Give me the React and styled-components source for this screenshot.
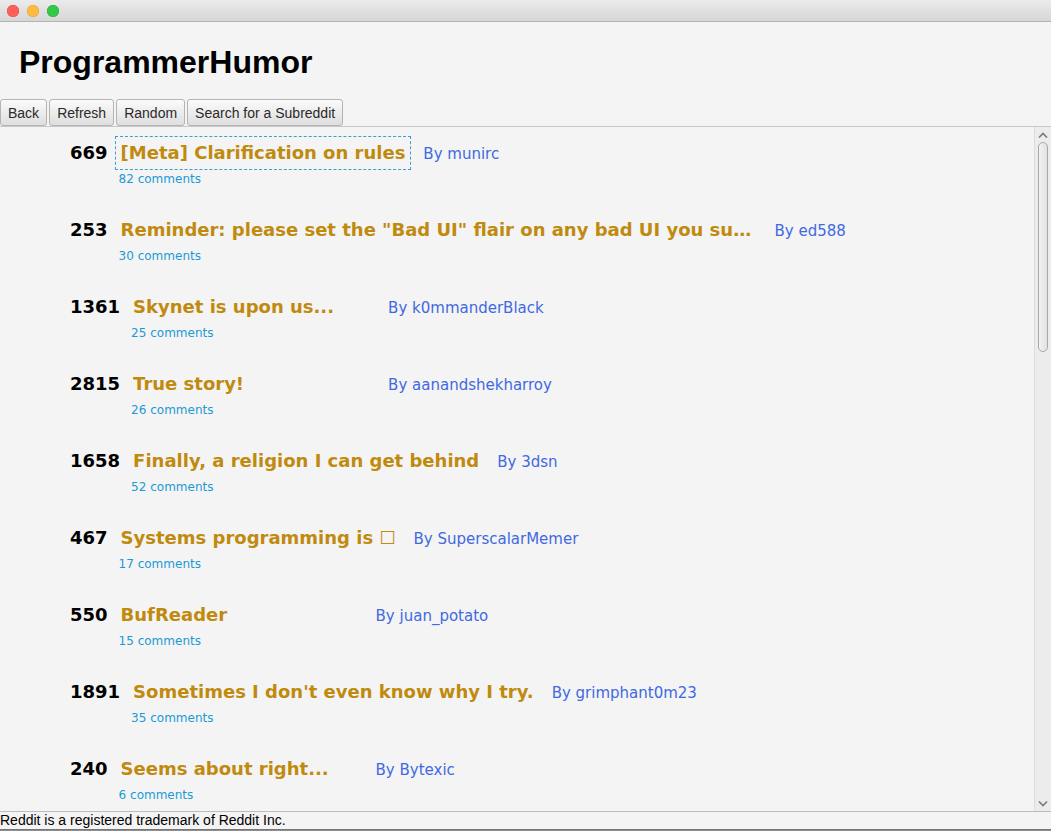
import React from 'react';
import styled, { createGlobalStyle } from 'styled-components';

const GlobalStyle = createGlobalStyle`
  html, body { margin: 0; padding: 0; height: 100%; background: #f4f4f4; }
  #root { height: 100%; }
`;

const posts = [
  { score: 669, title: '[Meta] Clarification on rules', author: 'munirc', comments: 82, focused: true },
  { score: 253, title: 'Reminder: please set the "Bad UI" flair on any bad UI you submit', author: 'ed588', comments: 30 },
  { score: 1361, title: 'Skynet is upon us...', author: 'k0mmanderBlack', comments: 25 },
  { score: 2815, title: 'True story!', author: 'aanandshekharroy', comments: 26 },
  { score: 1658, title: 'Finally, a religion I can get behind', author: '3dsn', comments: 52 },
  { score: 467, title: 'Systems programming is \u2610', author: 'SuperscalarMemer', comments: 17 },
  { score: 550, title: 'BufReader', author: 'juan_potato', comments: 15 },
  { score: 1891, title: "Sometimes I don't even know why I try.", author: 'grimphant0m23', comments: 35 },
  { score: 240, title: 'Seems about right...', author: 'Bytexic', comments: 6 },
];

function App() {
  return (
    <Window>
      <GlobalStyle />
      <TitleBar>
        <Light color="#fc605b" edge="#de4a45" />
        <Light color="#fdbc40" edge="#dea236" />
        <Light color="#34c84a" edge="#27aa35" />
      </TitleBar>
      <Header>ProgrammerHumor</Header>
      <Toolbar>
        <Button>Back</Button>
        <Button>Refresh</Button>
        <Button>Random</Button>
        <Button>Search for a Subreddit</Button>
      </Toolbar>
      <ScrollPane>
        <List>
          {posts.map((p) => (
            <Item key={p.score}>
              <Score>{p.score}</Score>
              <Body>
                <TitleRow>
                  <Title focused={p.focused}>{p.title}</Title>
                  <Author>By {p.author}</Author>
                </TitleRow>
                <Comments>{p.comments} comments</Comments>
              </Body>
            </Item>
          ))}
        </List>
        <ScrollBar>
          <Arrow>
            <svg width="10" height="6" viewBox="0 0 10 6"><path d="M1 5.5 L5 1.5 L9 5.5" fill="none" stroke="#7a7a7a" strokeWidth="1.6" /></svg>
          </Arrow>
          <Thumb />
          <Track />
          <Arrow>
            <svg width="10" height="6" viewBox="0 0 10 6"><path d="M1 0.5 L5 4.5 L9 0.5" fill="none" stroke="#7a7a7a" strokeWidth="1.6" /></svg>
          </Arrow>
        </ScrollBar>
      </ScrollPane>
      <Footer>Reddit is a registered trademark of Reddit Inc.</Footer>
      <Desktop />
    </Window>
  );
}
export default App;

const Window = styled.div`
  height: 100vh;
  display: flex;
  flex-direction: column;
  background: #f4f4f4;
  overflow: hidden;
`
const TitleBar = styled.div`
  height: 21px;
  flex-shrink: 0;
  display: flex;
  align-items: center;
  gap: 8px;
  padding-left: 7px;
  background: linear-gradient(#ebebeb, #d6d6d6);
  border-bottom: 1px solid #b3b3b3;
`
const Light = styled.span`
  width: 12px;
  height: 12px;
  border-radius: 50%;
  background: ${(p) => p.color};
  box-shadow: inset 0 0 0 0.5px ${(p) => p.edge};
`
const Header = styled.h1`
  margin: 0;
  height: 73px;
  padding-top: 4px;
  flex-shrink: 0;
  display: flex;
  align-items: center;
  padding-left: 19px;
  font-family: "Liberation Sans", Arial, sans-serif;
  font-weight: bold;
  font-size: 32px;
  color: #000;
`
const Toolbar = styled.div`
  display: flex;
  gap: 2px;
  flex-shrink: 0;
  height: 27px;
  border-bottom: 1px solid #c8c8c8;
`
const Button = styled.div`
  height: 27px;
  box-sizing: border-box;
  padding: 0 7px;
  display: flex;
  align-items: center;
  font-family: "Liberation Sans", Arial, sans-serif;
  font-size: 14px;
  color: #2a2a2a;
  background: linear-gradient(#fbfbfb, #dedede);
  border: 1px solid #b4b4b4;
  border-radius: 3px;
`
const ScrollPane = styled.div`
  flex: 1;
  min-height: 0;
  display: flex;
`
const List = styled.div`
  flex: 1;
  overflow: hidden;
  padding-top: 15px;
  font-family: "DejaVu Sans", Verdana, sans-serif;
`
const Item = styled.div`
  display: flex;
  align-items: flex-start;
  padding-left: 70px;
  gap: 13px;
  height: 77px;
`
const Score = styled.div`
  font-weight: bold;
  font-size: 18px;
  line-height: 22px;
  color: #000;
`
const Body = styled.div`
  display: flex;
  flex-direction: column;
  gap: 7px;
`
const TitleRow = styled.div`
  display: flex;
  align-items: baseline;
  gap: 18px;
`
const Title = styled.div`
  min-width: 237px;
  max-width: 636px;
  white-space: nowrap;
  overflow: hidden;
  text-overflow: ellipsis;
  font-weight: bold;
  font-size: 18px;
  line-height: 22px;
  color: #c08a0e;
  outline: ${(p) => (p.focused ? '1px dashed #3a9fd6' : 'none')};
  outline-offset: 5px;
`
const Author = styled.div`
  font-size: 15px;
  color: #4169e1;
  white-space: nowrap;
`
const Comments = styled.div`
  margin-left: -2px;
  font-size: 12px;
  line-height: 16px;
  color: #1b9ad4;
`
const ScrollBar = styled.div`
  width: 16px;
  flex-shrink: 0;
  display: flex;
  flex-direction: column;
  align-items: center;
  background: #ececec;
  border-left: 1px solid #dcdcdc;
`
const Arrow = styled.div`
  height: 15px;
  display: flex;
  align-items: center;
  justify-content: center;
`
const Thumb = styled.div`
  width: 10px;
  height: 210px;
  box-sizing: border-box;
  border: 1px solid #a8a8a8;
  border-radius: 5px;
  background: linear-gradient(90deg, #f2f2f2, #e2e2e2);
`
const Track = styled.div`
  flex: 1;
`
const Footer = styled.div`
  flex-shrink: 0;
  height: 17px;
  border-top: 1px solid #bdbdbd;
  font-family: "Liberation Sans", Arial, sans-serif;
  font-size: 14px;
  line-height: 17px;
  color: #000;
`
const Desktop = styled.div`
  flex-shrink: 0;
  height: 2px;
  background: linear-gradient(#6a6a6a, #9a9a9a);
`
